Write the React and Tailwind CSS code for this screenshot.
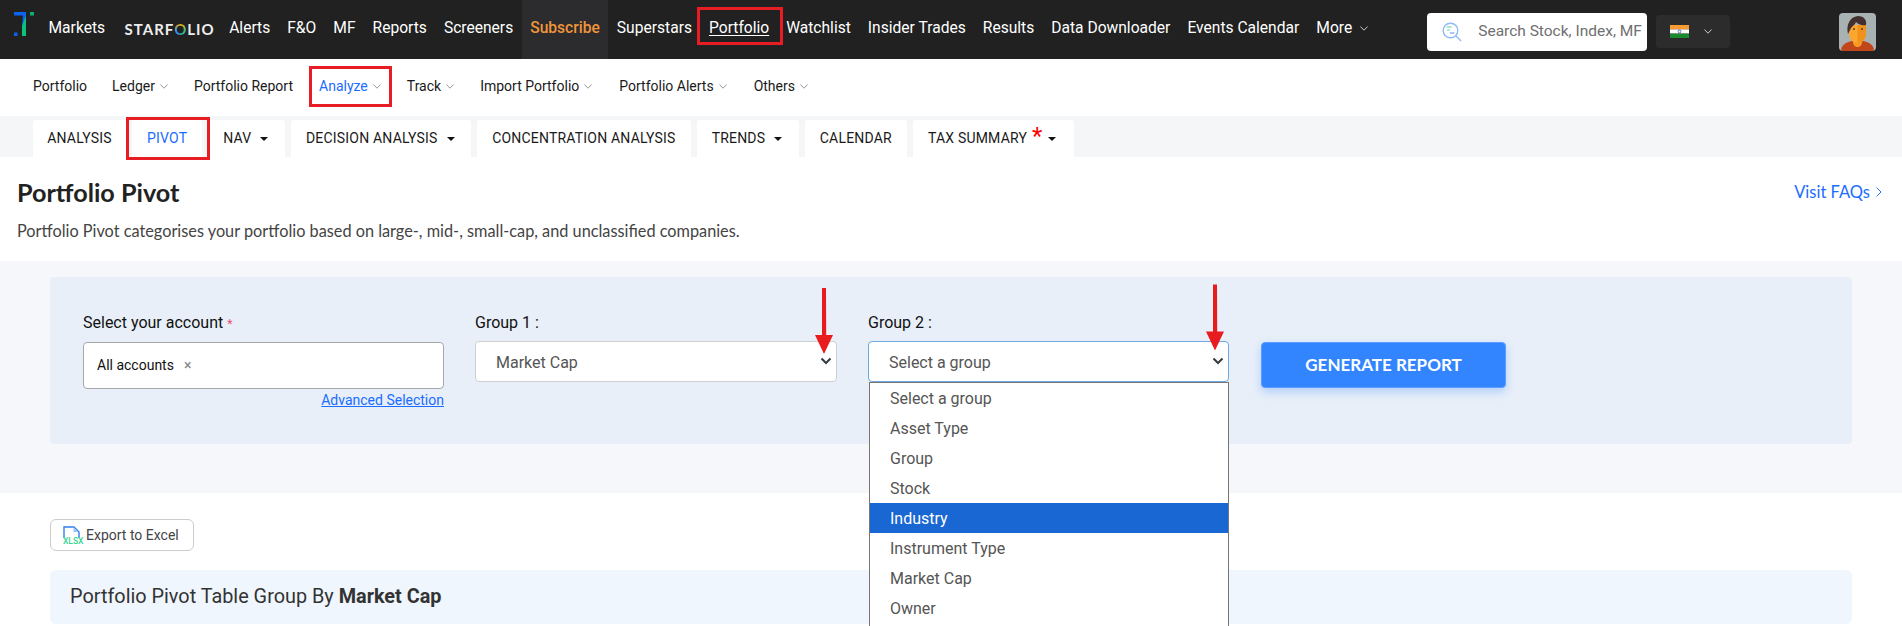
import React from 'react';

const topLinks = ['Alerts', 'F&O', 'MF', 'Reports', 'Screeners'];
const topLinksAfter = ['Watchlist', 'Insider Trades', 'Results', 'Data Downloader', 'Events Calendar'];
const groupOptions = ['Select a group', 'Asset Type', 'Group', 'Stock', 'Industry', 'Instrument Type', 'Market Cap', 'Owner'];

function Chevron({ className }) {
  return (
    <svg className={className} width="8" height="5" viewBox="0 0 8 5" fill="none" stroke="currentColor" strokeWidth="0.9">
      <path d="M0.4 0.5 4 4.2 7.6 0.5" />
    </svg>
  );
}

function SelectChevron() {
  return (
    <svg className="absolute right-[4px] top-[15px] text-[#343a40]" width="12" height="8" viewBox="0 0 12 8" fill="none" stroke="currentColor" strokeWidth="2">
      <path d="M1.5 1.5 6 6l4.500-4.500" />
    </svg>
  );
}

function RedArrow({ className }) {
  return (
    <svg className={`absolute ${className}`} width="20" height="66" viewBox="0 0 20 66" fill="#e81c1f">
      <path d="M8 0h4l.2 47H19L10 66 1 47h7z" />
    </svg>
  );
}

function Logo() {
  return (
    <svg className="mt-[12px] shrink-0" width="20" height="24" viewBox="0 0 20 24">
      <path d="M0 0h12v3.500L9.500 14H8l1-10.500H0z" fill="#0b63f0" />
      <path d="M8 24V14L12 3.500V24z" fill="#0cc278" />
      <rect x="0" y="20.500" width="3.500" height="3.500" fill="#0b63f0" />
      <rect x="16" y="0" width="4" height="3.500" fill="#09b36f" />
    </svg>
  );
}

function SearchIcon() {
  return (
    <svg width="20" height="20" viewBox="0 0 20 20" fill="none">
      <circle cx="8.500" cy="8.500" r="7.300" stroke="#8db9f5" strokeWidth="1.400" />
      <path d="M14 14l5 5" stroke="#8db9f5" strokeWidth="1.400" />
      <path d="M4.500 5h5" stroke="#7edcae" strokeWidth="1.300" />
      <path d="M5 8h3" stroke="#7edcae" strokeWidth="1.200" />
      <path d="M8 11h4.500" stroke="#7fa8ea" strokeWidth="1.300" />
    </svg>
  );
}

function Flag() {
  return (
    <svg width="19" height="13" viewBox="0 0 19 13">
      <rect width="19" height="4.400" fill="#f79a32" />
      <rect y="4.400" width="19" height="4.200" fill="#ffffff" />
      <rect y="8.600" width="19" height="4.400" fill="#1a8a2e" />
      <circle cx="9.500" cy="6.500" r="1.400" fill="none" stroke="#2a3d8f" strokeWidth="0.700" />
    </svg>
  );
}

function Avatar() {
  return (
    <svg className="rounded-[4px] mt-[13px] ml-auto mr-[26px] shrink-0" width="37" height="38" viewBox="0 0 37 38">
      <rect width="37" height="38" fill="#a9b2b3" />
      <path d="M2 38c0-6 5-9 11-10h11c6 1 11 4 11 10z" fill="#c2461c" />
      <path d="M14 24h9v5c0 3-2 5-4.500 5S14 32 14 29z" fill="#f59a23" />
      <path d="M10 12h17v9c0 5-4 9-8.500 9S10 26 10 21z" fill="#fca62f" />
      <path d="M18.500 12h8.500v9c0 5-4 9-8.500 9z" fill="#f0921d" />
      <path d="M9 21c-2-8 1-17 10-18 6 0 9 4 8 9-4 1-8-1-10-3-1 3-4 4-5 6z" fill="#43302e" />
      <circle cx="15" cy="16" r="0.900" fill="#43302e" />
      <circle cx="23" cy="16" r="0.900" fill="#43302e" />
    </svg>
  );
}

function ExcelIcon() {
  return (
    <div className="relative w-[18px] h-[18px] shrink-0">
      <svg className="absolute left-0 top-0" width="17" height="13" viewBox="0 0 17 13" fill="none">
        <path d="M1 12V1h10l5 5v6" stroke="#2f80ed" strokeWidth="1.400" />
        <path d="M10.500 1v5h5z" fill="#9cc4f7" />
      </svg>
      <span className="absolute left-0 top-[11px] text-[8.500px] leading-[8px] text-[#34d68f] font-medium">XLSX</span>
    </div>
  );
}

function Caret() {
  return <span className="w-0 h-0 border-x-[4px] border-x-transparent border-t-[4.500px] border-t-[#111]" />;
}

function Tab({ children, caret, blue }) {
  return (
    <div className={`h-[37px] bg-white rounded-t-[3px] px-[15px] flex items-center text-[14px] tracking-[0.2px] ${blue ? 'text-[#1a6dff]' : 'text-[#1a1a1a]'}`}>
      {children}
      {caret && <span className="ml-[9px] mr-[1.500px] flex"><Caret /></span>}
    </div>
  );
}

function SubLink({ children, chevron, className = '' }) {
  return (
    <div className={`flex items-center text-[14px] text-[#1a1a1a] ${className}`}>
      {children}
      {chevron && <Chevron className="ml-[5px] text-[#8a8a8a]" />}
    </div>
  );
}

export default function App() {
  return (
    <div className="w-[1902px] h-[626px] overflow-hidden bg-white font-[Roboto,sans-serif]">
      {/* top bar */}
      <div className="h-[59px] bg-[#212121] flex items-start pl-[14px] text-white text-[15.600px] whitespace-nowrap">
        <Logo />
        <nav className="flex items-stretch h-[59px] ml-[6px]">
          <a className="px-[8.500px] pt-[17px]">Markets</a>
          <a className="pl-[11px] pr-[6px] pt-[19px] font-[Lato,sans-serif] font-bold text-[15px] leading-[20px] tracking-[1px] text-[#eeeeee]">
            STARF<span className="text-transparent bg-clip-text bg-[conic-gradient(#f5b301,#2fc46f,#2d8cff,#f5b301)]">O</span>LIO
          </a>
          {topLinks.map((l) => (
            <a key={l} className="px-[8.500px] pt-[17px]">{l}</a>
          ))}
          <a className="px-[8.500px] pt-[17px] bg-[#2c2c2e] text-[#f0953a] font-medium">Subscribe</a>
          <a className="px-[8.500px] pt-[17px]">Superstars</a>
          <a className="relative px-[8.500px] pt-[17px]">
            <span className="underline underline-offset-2">Portfolio</span>
            <span className="absolute left-[-4px] right-[-5px] top-[7px] h-[38px] border-[3px] border-[#e81c24]" />
          </a>
          {topLinksAfter.map((l) => (
            <a key={l} className="px-[8.500px] pt-[17px]">{l}</a>
          ))}
          <a className="pl-[8.500px] pt-[17px] flex items-start">
            More
            <Chevron className="ml-[8px] mt-[9px] text-[#dddddd]" />
          </a>
        </nav>
        <div className="ml-[59px] mt-[13px] w-[220px] h-[38px] bg-white rounded-[4px] flex items-center pl-[15px] text-[#6f6f6f] text-[15.500px]">
          <SearchIcon />
          <span className="ml-[16px]">Search Stock, Index, MF</span>
        </div>
        <div className="ml-[9px] mt-[15px] w-[74px] h-[33px] bg-[#2c2c2c] rounded-[4px] flex items-center pl-[14px]">
          <Flag />
          <Chevron className="ml-[15px] text-[#dddddd]" />
        </div>
        <Avatar />
      </div>

      {/* sub nav */}
      <div className="h-[57px] flex items-center gap-[26px] pl-[33px] pb-[3px]">
        <SubLink>Portfolio</SubLink>
        <SubLink chevron className="ml-[-1px]">Ledger</SubLink>
        <SubLink>Portfolio Report</SubLink>
        <div className="relative">
          <div className="flex items-center text-[14px] text-[#1a6dff]">
            Analyze
            <Chevron className="ml-[5px] text-[#8a8a8a]" />
          </div>
          <span className="absolute left-[-10px] right-[-11px] top-[-10px] h-[41px] border-[3px] border-[#e81c24]" />
        </div>
        <SubLink chevron>Track</SubLink>
        <SubLink chevron>Import Portfolio</SubLink>
        <SubLink chevron className="ml-[1px]">Portfolio Alerts</SubLink>
        <SubLink chevron className="ml-[1px]">Others</SubLink>
      </div>

      {/* tabs */}
      <div className="h-[41px] bg-[#f5f6f8] pt-[4px] pl-[33px] flex gap-[6px]">
        <div className="w-[93px] h-[37px] bg-white rounded-t-[3px] flex items-center justify-center text-[14px] tracking-[0.2px] text-[#1a1a1a]">ANALYSIS</div>
        <div className="relative">
          <Tab blue>PIVOT</Tab>
          <span className="absolute left-[-6px] right-[-8px] top-[-3px] h-[43px] border-[3px] border-[#e81c24]" />
        </div>
        <Tab caret>NAV</Tab>
        <Tab caret>DECISION ANALYSIS</Tab>
        <Tab>CONCENTRATION ANALYSIS</Tab>
        <Tab caret>TRENDS</Tab>
        <Tab>CALENDAR</Tab>
        <div className="h-[37px] bg-white rounded-t-[3px] pl-[15px] pr-[18px] flex items-center text-[14px] tracking-[0.2px] text-[#1a1a1a]">
          TAX SUMMARY
          <span className="ml-[5px] mb-[5px] text-[#f00] text-[24px] leading-[16px] h-[16px]">*</span>
          <span className="ml-[5px] flex"><Caret /></span>
        </div>
      </div>

      {/* page header */}
      <div className="h-[104px] px-[17px] pt-[20px] font-[Lato,sans-serif]">
        <div className="flex justify-between items-center h-[32px]">
          <h1 className="text-[25.200px] font-bold text-[#222]">Portfolio Pivot</h1>
          <a className="flex items-center text-[16.500px] text-[#1a6dff] mr-[3px] mb-[2px]">
            Visit FAQs
            <svg className="ml-[6px]" width="6" height="10" viewBox="0 0 6 10" fill="none" stroke="currentColor" strokeWidth="1">
              <path d="M0.700 0.700 5 5 0.700 9.300" />
            </svg>
          </a>
        </div>
        <p className="mt-[10px] text-[16.300px] leading-[24px] text-[#444]">
          Portfolio Pivot categorises your portfolio based on large-, mid-, small-cap, and unclassified companies.
        </p>
      </div>

      {/* filter band */}
      <div className="h-[232px] bg-[#f5f7fa] px-[50px] pt-[16px]">
        <div className="h-[167px] bg-[#e8eff9] rounded-[4px] pl-[33px] pt-[34px] flex">
          <div className="w-[361px]">
            <label className="block h-[24px] leading-[24px] text-[16px] text-[#111]">
              Select your account <span className="text-[#f0506e] text-[12px]">*</span>
            </label>
            <div className="mt-[7px] h-[47px] bg-white border border-[#a8a8a8] rounded-[4px] flex items-center pl-[13px] text-[14px] text-[#111]">
              All accounts
              <span className="ml-[10px] text-[#8c8c8c] font-medium">×</span>
            </div>
            <div className="mt-[1px] text-right text-[14px] leading-[20px] text-[#1a6dff] underline">Advanced Selection</div>
          </div>

          <div className="w-[362px] ml-[31px]">
            <label className="block h-[24px] leading-[24px] text-[16px] text-[#111]">Group 1 :</label>
            <div className="relative mt-[6px] h-[41px] bg-white border border-[#cfcfcf] rounded-[4px] flex items-center pl-[20px] pt-[2px] text-[16px] text-[#555]">
              Market Cap
              <SelectChevron />
              <RedArrow className="right-[2px] top-[-54px]" />
            </div>
          </div>

          <div className="w-[361px] ml-[31px]">
            <label className="block h-[24px] leading-[24px] text-[16px] text-[#111]">Group 2 :</label>
            <div className="relative mt-[6px] h-[41px] bg-white border border-[#6ea8e0] rounded-[4px] flex items-center pl-[20px] pt-[2px] text-[16px] text-[#555]">
              Select a group
              <SelectChevron />
              <RedArrow className="right-[3px] top-[-59px] h-[69px]" />
              <ul className="absolute left-[0px] right-[-1px] top-[40px] pb-[30px] bg-white border border-[#767676]">
                {groupOptions.map((o) => (
                  <li key={o} className={`h-[30px] leading-[30px] pl-[20px] pt-[1px] ${o === 'Industry' ? 'bg-[#1967d2] text-white' : 'text-[#555]'}`}>{o}</li>
                ))}
              </ul>
            </div>
          </div>

          <button className="ml-[32px] mt-[31px] w-[245px] h-[46px] bg-[#3385ff] border border-[#5c9dff] rounded-[4px] text-white font-[Lato,sans-serif] font-bold text-[17px] shadow-[0_4px_10px_rgba(51,133,255,0.3)]">
            GENERATE REPORT
          </button>
        </div>
      </div>

      {/* table head */}
      <div className="px-[50px] pt-[26px]">
        <button className="h-[32px] w-[144px] border border-[#cccccc] rounded-[6px] bg-white flex items-center pl-[12px] text-[14px] text-[#444]">
          <ExcelIcon />
          <span className="ml-[5px]">Export to Excel</span>
        </button>
        <div className="mt-[19px] h-[54px] bg-[#f0f6fe] rounded-[6px] flex items-center pl-[20px] text-[19.850px] text-[#333]">
          <span>Portfolio Pivot Table Group By <span className="font-bold">Market Cap</span></span>
        </div>
      </div>
    </div>
  );
}
